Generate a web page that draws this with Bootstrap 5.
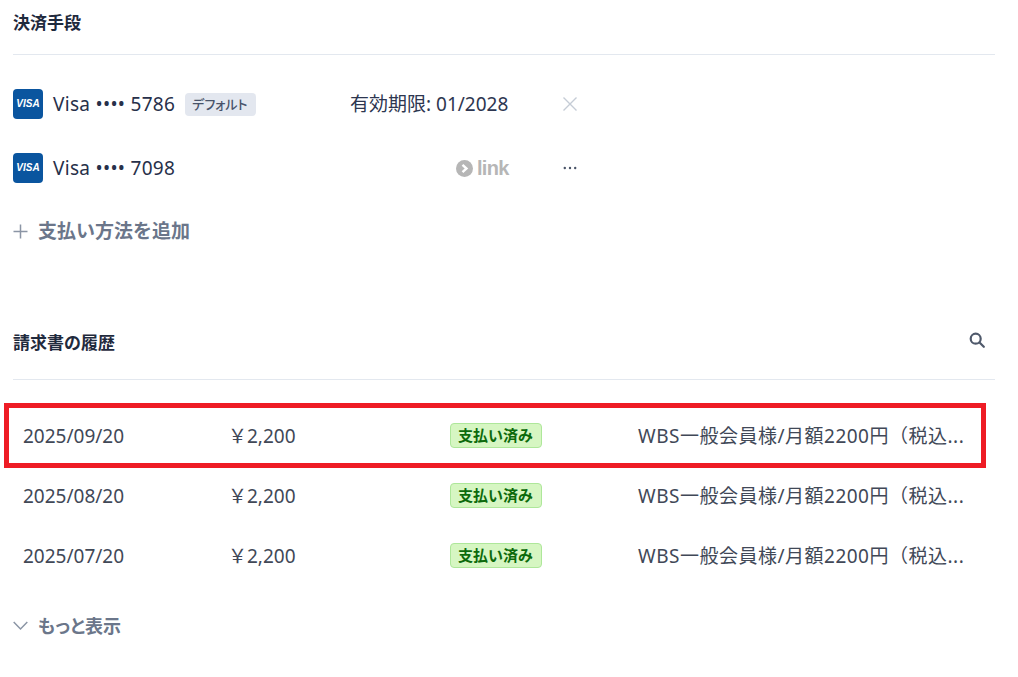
<!doctype html>
<html lang="ja">
<head>
<meta charset="utf-8">
<title>決済手段</title>
<link href="https://cdn.jsdelivr.net/npm/bootstrap@5.3.0/dist/css/bootstrap.min.css" rel="stylesheet">
<style>
body{font-family:"Noto Sans","Noto Sans CJK JP",sans-serif;background:#fff;color:#1f2a44;font-size:19px;overflow:hidden}
.pg{position:relative;height:677px;padding:0 23px 0 13px}
.sec-head{font-size:17px;font-weight:700;color:#1f2a3d;border-bottom:1px solid #e3e8ef}
.sec-a{height:55px;padding-top:10px;line-height:26px}
.sec-b{height:72px;margin-top:62px;padding-top:22px;line-height:26px}
.pm-row{height:64px}
.pm-first{margin-top:17px}
.pm-name{width:337px}
.pm-mid{width:212px}
.visa-ico{width:30px;height:30px;margin-right:10px;border-radius:4px;background:#0a559f;color:#fff;font:italic 700 10px/30px "Liberation Sans",sans-serif;text-align:center}
.pm-txt{font-size:19px;color:#27304a;line-height:24px;letter-spacing:.3px}
.def-tag{font-size:13px;font-weight:500;line-height:23px;height:23px;padding:0 8px 0 7px;margin-left:10px;background:#e3e7ef;border-radius:4px;color:#48536a;font-feature-settings:"palt"}
.exp-txt{font-size:19px;color:#2d3650;line-height:24px}
.link-logo{font:700 20px/24px "Liberation Sans",sans-serif;color:#b6b6b6;margin-left:106px;letter-spacing:-.7px}
.add-row{font-size:19px;font-weight:700;color:#6b768a;height:30px;line-height:30px;margin-top:16px}
.add-ico{margin-right:10px}
.hist-row{display:grid;grid-template-columns:206px 221px 188px 328px;height:60px;padding-left:10px;align-items:center;color:#414857;font-size:19px}
.hist-first{margin-top:26px}
.amt-cell{margin-left:-1px}
.pay-tag{font-size:15px;font-weight:700;line-height:23px;height:25px;padding:0 8px 0 7px;margin-top:-2px;background:#d6f6c2;border:1px solid #aee79a;border-radius:4px;color:#0c6a0c}
.desc-cell{white-space:nowrap;letter-spacing:.5px}
.more-row{font-size:18px;font-weight:700;color:#6b768a;height:30px;line-height:30px;margin-top:25px;font-feature-settings:"palt"}
.search-ico{margin-right:10px;margin-top:2px}
.red-box{position:absolute;left:4px;top:403px;width:982px;height:65px;border:5px solid #ee1c25;pointer-events:none}
</style>
</head>
<body>
<div class="pg">
  <div class="sec-head sec-a">決済手段</div>

  <div class="pm-first pm-row d-flex align-items-center">
    <div class="pm-name d-flex align-items-center">
      <div class="visa-ico flex-shrink-0">VISA</div>
      <span class="pm-txt">Visa •••• 5786</span>
      <span class="def-tag">デフォルト</span>
    </div>
    <div class="pm-mid exp-txt">有効期限: 01/2028</div>
    <svg width="16" height="16" viewBox="0 0 16 16" fill="none" stroke="#c5ccd6" stroke-width="1.4"><path d="M1.5 1.5l13 13M14.5 1.5l-13 13"/></svg>
  </div>

  <div class="pm-row d-flex align-items-center">
    <div class="pm-name d-flex align-items-center">
      <div class="visa-ico flex-shrink-0">VISA</div>
      <span class="pm-txt">Visa •••• 7098</span>
    </div>
    <div class="pm-mid d-flex align-items-center">
      <div class="link-logo d-flex align-items-center gap-1">
        <svg width="17" height="17" viewBox="0 0 17 17"><circle cx="8.5" cy="8.5" r="8.5" fill="#b6b6b6"/><path d="M6.5 4.8l4 3.7-4 3.7" fill="none" stroke="#fff" stroke-width="2.4"/></svg>
        <span>link</span>
      </div>
    </div>
    <svg width="16" height="16" viewBox="0 0 16 16" fill="#4a5468"><circle cx="2.8" cy="8" r="1.2"/><circle cx="8" cy="8" r="1.2"/><circle cx="13.2" cy="8" r="1.2"/></svg>
  </div>

  <div class="add-row d-flex align-items-center">
    <svg class="add-ico flex-shrink-0" width="15" height="15" viewBox="0 0 15 15" fill="none" stroke="#8b95a5" stroke-width="1.5"><path d="M7.5 .5v14M.5 7.5h14"/></svg>
    <span>支払い方法を追加</span>
  </div>

  <div class="sec-head sec-b d-flex justify-content-between">
    <span>請求書の履歴</span>
    <svg class="search-ico" width="16" height="16" viewBox="0 0 16 16" fill="none" stroke="#4f596b" stroke-width="2.2"><circle cx="6.7" cy="6.7" r="5"/><path d="M10.5 10.5l4.3 4.3" stroke-linecap="round"/></svg>
  </div>

  <div class="hist-row hist-first">
    <span>2025/09/20</span><span class="amt-cell">￥2,200</span>
    <span class="d-flex"><span class="pay-tag">支払い済み</span></span>
    <span class="desc-cell">WBS一般会員様/月額2200円（税込...</span>
  </div>
  <div class="hist-row">
    <span>2025/08/20</span><span class="amt-cell">￥2,200</span>
    <span class="d-flex"><span class="pay-tag">支払い済み</span></span>
    <span class="desc-cell">WBS一般会員様/月額2200円（税込...</span>
  </div>
  <div class="hist-row">
    <span>2025/07/20</span><span class="amt-cell">￥2,200</span>
    <span class="d-flex"><span class="pay-tag">支払い済み</span></span>
    <span class="desc-cell">WBS一般会員様/月額2200円（税込...</span>
  </div>

  <div class="more-row d-flex align-items-center">
    <svg class="add-ico flex-shrink-0" width="15" height="10" viewBox="0 0 15 10" fill="none" stroke="#8b95a5" stroke-width="1.5"><path d="M.7 1l6.8 7 6.8-7"/></svg>
    <span>もっと表示</span>
  </div>

  <div class="red-box"></div>
</div>
<script src="https://cdn.jsdelivr.net/npm/bootstrap@5.3.0/dist/js/bootstrap.bundle.min.js"></script>
</body>
</html>
